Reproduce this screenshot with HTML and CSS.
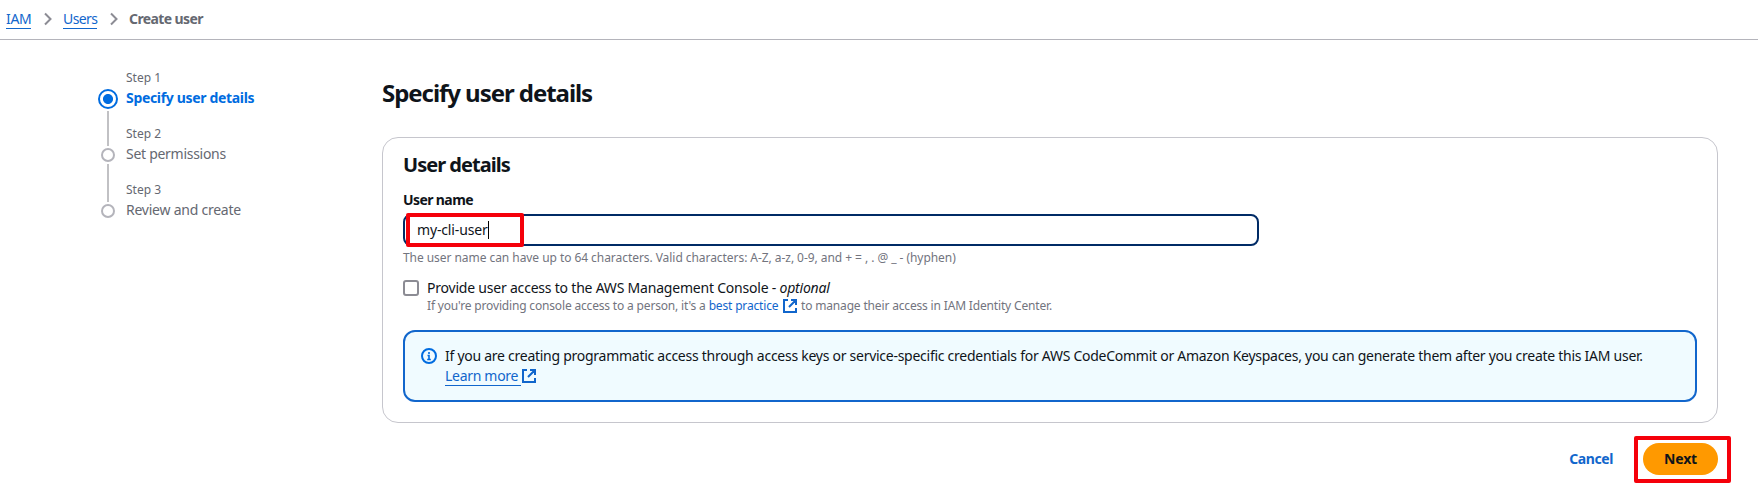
FILE: index.html
```
<!DOCTYPE html>
<html lang="en">
<head>
<meta charset="utf-8">
<title>Create user</title>
<link rel="stylesheet" href="styles.css">
</head>
<body>
<nav class="breadcrumbs">
  <a class="crumb crumb-iam">IAM</a>
  <svg class="chevron" viewBox="0 0 8 14"><path d="M1 1.5 6.5 7 1 12.5"/></svg>
  <a class="crumb crumb-users">Users</a>
  <svg class="chevron" viewBox="0 0 8 14"><path d="M1 1.5 6.5 7 1 12.5"/></svg>
  <span class="crumb-current">Create user</span>
</nav>
<div class="layout">
  <ol class="steps">
    <li class="step active">
      <div class="rail"><span class="dot"></span><span class="line"></span></div>
      <div><div class="step-no">Step 1</div><div class="step-name s1">Specify user details</div></div>
    </li>
    <li class="step">
      <div class="rail"><span class="dot"></span><span class="line"></span></div>
      <div><div class="step-no">Step 2</div><div class="step-name s2">Set permissions</div></div>
    </li>
    <li class="step">
      <div class="rail"><span class="dot"></span></div>
      <div><div class="step-no">Step 3</div><div class="step-name s3">Review and create</div></div>
    </li>
  </ol>
  <main class="main">
    <h1>Specify user details</h1>
    <section class="card">
      <h2>User details</h2>
      <div class="label">User name</div>
      <div class="input"><span class="value">my-cli-user</span><span class="caret"></span><span class="mark mark-input"></span></div>
      <div class="hint">The user name can have up to 64 characters. Valid characters: A-Z, a-z, 0-9, and + = , . @ _ - (hyphen)</div>
      <div class="check">
        <span class="box"></span>
        <div>
          <div class="check-label">Provide user access to the AWS Management Console - <em>optional</em></div>
          <div class="desc"><span class="d1">If you're providing console access to a person, it's a <a>best practice</a></span><svg class="ext" viewBox="0 0 14 14"><path d="M5 1H1v12h12V9M8 1h5v5M13 1 6 8"/></svg><span class="d2">to manage their access in IAM Identity Center.</span></div>
        </div>
      </div>
      <div class="alert">
        <svg class="info" viewBox="0 0 16 16"><circle cx="8" cy="8" r="7"/><path d="M8 4v2M6.5 7.5H8V12M6.2 11.5h3.6"/></svg>
        <div>
          <div class="alert-text">If you are creating programmatic access through access keys or service-specific credentials for AWS CodeCommit or Amazon Keyspaces, you can generate them after you create this IAM user.</div>
          <div class="learn"><a>Learn more</a><svg class="ext" viewBox="0 0 14 14"><path d="M5 1H1v12h12V9M8 1h5v5M13 1 6 8"/></svg></div>
        </div>
      </div>
    </section>
    <div class="actions">
      <a class="cancel">Cancel</a>
      <div class="next"><span>Next</span><span class="mark mark-next"></span></div>
    </div>
  </main>
</div>
</body>
</html>
```
FILE: styles.css
```
* { box-sizing: border-box; }
body { margin: 0; height: 491px; overflow: hidden; background: #fff; color: #0f141a; font: 14px/20px "Noto Sans", "Open Sans", sans-serif; white-space: nowrap; }
svg { display: block; flex: none; fill: none; }
a { color: #1166cc; }

.breadcrumbs { display: flex; height: 40px; padding: 9px 0 0 6px; border-bottom: 1px solid #b4b4bb; }
.crumb { height: 20px; border-bottom: 1px solid #1166cc; }
.crumb-iam { width: 25px; letter-spacing: -0.3px; }
.crumb-users { width: 34px; letter-spacing: -0.6px; }
.chevron { width: 8px; height: 14px; margin: 3px 11px 0 13px; stroke: #8c8c94; stroke-width: 2; }
.crumb-current { color: #656871; font-weight: 700; letter-spacing: -0.6px; }

.layout { display: flex; }
.steps { width: 284px; flex: none; margin: 29px 0 0 98px; padding: 0; list-style: none; color: #656871; }
.step { display: flex; gap: 8px; height: 56px; }
.rail { display: flex; flex-direction: column; align-items: center; width: 20px; padding-top: 23px; }
.dot { width: 14px; height: 14px; border: 2px solid #b4b4bb; border-radius: 50%; flex: none; }
.line { width: 2px; height: 38px; margin-top: 2px; background: #c1c1c4; flex: none; }
.active .rail { padding-top: 20px; }
.active .dot { width: 20px; height: 20px; background: radial-gradient(circle, #006ce0 4.6px, #fff 5.4px); border-color: #006ce0; }
.active .line { height: 35px; }
.step-no { margin-bottom: 2px; padding-top: 1px; font-size: 12px; line-height: 16px; }
.active .step-name { color: #006ce0; font-weight: 700; }
.s1 { letter-spacing: -0.33px; }
.s2 { letter-spacing: -0.28px; }
.s3 { letter-spacing: -0.24px; }

.main { width: 1336px; padding-top: 38px; }
h1 { margin: 0 0 29px; font-size: 24px; line-height: 30px; letter-spacing: -1.05px; }
.card { height: 286px; padding: 15px 20px 20px; border: 1px solid #c6c6cd; border-radius: 16px; }
h2 { margin: 0 0 13px; font-size: 20px; line-height: 24px; letter-spacing: -0.98px; }
.label { margin-bottom: 4px; font-weight: 700; letter-spacing: -0.6px; }
.input { position: relative; display: flex; align-items: center; width: 856px; height: 32px; padding-left: 12px; border: 2px solid #002b66; border-radius: 8px; }
.value { letter-spacing: -0.15px; }
.caret { width: 1px; height: 18px; background: #000; }
.mark { position: absolute; border: 4px solid #f5000a; border-radius: 2px; }
.mark-input { left: 1px; top: -3px; width: 118px; height: 34px; }
.hint { margin-top: 4px; color: #72747e; font-size: 12px; line-height: 16px; letter-spacing: -0.055px; }
.check { display: flex; gap: 8px; margin-top: 12px; }
.box { width: 16px; height: 16px; margin-top: 2px; border: 2px solid #8c8c94; border-radius: 3px; }
.check-label { letter-spacing: -0.21px; }
.desc { display: flex; color: #72747e; font-size: 12px; line-height: 16px; }
.d1 { width: 356px; letter-spacing: -0.17px; }
.d2 { letter-spacing: -0.165px; margin-left: 4px; }
.ext { width: 14px; height: 14px; margin-top: 1px; stroke: #1166cc; stroke-width: 2; }
.alert { display: flex; gap: 8px; height: 72px; margin-top: 16px; padding: 14px 16px; border: 2px solid #1166cc; border-radius: 12px; background: #f0fbff; }
.info { width: 16px; height: 16px; margin-top: 2px; stroke: #006ce0; stroke-width: 2; }
.info path { stroke-width: 1.6; }
.alert-text { letter-spacing: -0.266px; }
.learn { display: flex; }
.learn a { width: 76px; height: 20px; border-bottom: 1px solid #1166cc; letter-spacing: -0.3px; }
.learn .ext { margin: 3px 0 0 1px; }

.actions { display: flex; justify-content: flex-end; align-items: center; gap: 30px; margin-top: 20px; font-weight: 700; }
.cancel { letter-spacing: -0.4px; }
.next { position: relative; display: flex; align-items: center; justify-content: center; width: 75px; height: 32px; border-radius: 16px; background: #ff9900; letter-spacing: -0.2px; }
.mark-next { left: -9px; top: -7px; width: 97px; height: 47px; }
```
